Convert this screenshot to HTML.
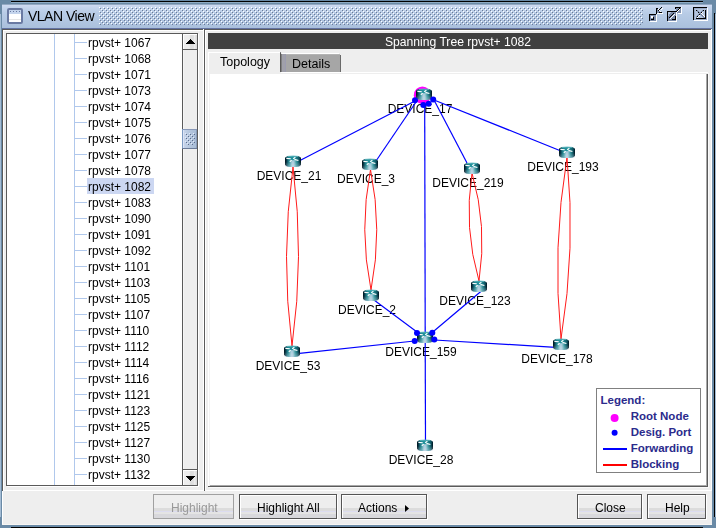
<!DOCTYPE html>
<html><head><meta charset="utf-8"><style>
html,body{margin:0;padding:0;width:716px;height:528px;overflow:hidden;font-family:"Liberation Sans", sans-serif;}
</style></head><body>
<div style="position:absolute;left:0px;top:0px;width:716px;height:528px;background:#6a8aa6"></div>
<div style="position:absolute;left:11px;top:1px;width:692px;height:1px;background:#000"></div>
<div style="position:absolute;left:11px;top:2px;width:692px;height:1px;background:#90acc4"></div>
<div style="position:absolute;left:11px;top:527px;width:692px;height:1px;background:#000"></div>
<div style="position:absolute;left:714px;top:13px;width:1px;height:504px;background:#000"></div>
<div style="position:absolute;left:0px;top:14px;width:1px;height:503px;background:#a4bcd4"></div>
<div style="position:absolute;left:715px;top:14px;width:1px;height:503px;background:#a4bcd4"></div>
<div style="position:absolute;left:2px;top:4px;width:710px;height:521px;background:#eeeeee"></div>
<div style="position:absolute;left:2px;top:4px;width:710px;height:25px;background:linear-gradient(#93a9c2 0px,#93a9c2 1px,#d0daf2 1px,#c6d6ee 3px,#b8cce6 9px,#aac0dc 24px,#6474a2 24px,#6474a2 25px)"></div>
<svg style="position:absolute;left:99px;top:7px" width="544" height="18"><defs><pattern id="bp" width="4" height="4" patternUnits="userSpaceOnUse"><rect x="0" y="0" width="1" height="1" fill="#ffffff"/><rect x="2" y="2" width="1" height="1" fill="#ffffff"/><rect x="1" y="1" width="1" height="1" fill="#6a7a98"/><rect x="3" y="3" width="1" height="1" fill="#6a7a98"/></pattern></defs><rect width="544" height="18" fill="url(#bp)"/></svg>
<svg style="position:absolute;left:7px;top:8px" width="16" height="16">
<rect x="0" y="0" width="16" height="16" rx="2.2" fill="#6a7aa2"/>
<rect x="2" y="2" width="12" height="4" fill="#c4d4ec"/>
<rect x="3" y="3" width="1" height="1" fill="#6a7aa2"/><rect x="6" y="3" width="1" height="1" fill="#6a7aa2"/><rect x="9" y="3" width="1" height="1" fill="#6a7aa2"/><rect x="12" y="3" width="1" height="1" fill="#6a7aa2"/>
<rect x="2" y="6" width="12" height="8" fill="#ffffff"/>
<rect x="2" y="11" width="12" height="1" fill="#e6e6e6"/>
</svg>
<div style="position:absolute;left:28px;top:9.15px;font-size:14px;line-height:14px;white-space:pre;will-change:transform;color:#000;letter-spacing:-0.5px">VLAN View</div>
<svg style="position:absolute;left:647px;top:7px" width="18" height="15" shape-rendering="crispEdges"><rect x="14" y="0" width="1" height="1" fill="#000000"/><rect x="9" y="1" width="2" height="1" fill="#000000"/><rect x="13" y="1" width="1" height="1" fill="#000000"/><rect x="15" y="1" width="1" height="1" fill="#ffffff"/><rect x="9" y="2" width="1" height="1" fill="#000000"/><rect x="10" y="2" width="1" height="1" fill="#7d8dab"/><rect x="11" y="2" width="1" height="1" fill="#ffffff"/><rect x="12" y="2" width="1" height="1" fill="#000000"/><rect x="14" y="2" width="1" height="1" fill="#ffffff"/><rect x="9" y="3" width="1" height="1" fill="#000000"/><rect x="10" y="3" width="1" height="1" fill="#7d8dab"/><rect x="11" y="3" width="1" height="1" fill="#000000"/><rect x="12" y="3" width="1" height="1" fill="#ffffff"/><rect x="9" y="4" width="1" height="1" fill="#000000"/><rect x="10" y="4" width="3" height="1" fill="#7d8dab"/><rect x="13" y="4" width="1" height="1" fill="#ffffff"/><rect x="9" y="5" width="1" height="1" fill="#000000"/><rect x="10" y="5" width="2" height="1" fill="#7d8dab"/><rect x="12" y="5" width="3" height="1" fill="#000000"/><rect x="9" y="6" width="1" height="1" fill="#000000"/><rect x="10" y="6" width="6" height="1" fill="#ffffff"/><rect x="2" y="7" width="7" height="1" fill="#000000"/><rect x="2" y="8" width="1" height="1" fill="#000000"/><rect x="3" y="8" width="6" height="1" fill="#7d8dab"/><rect x="9" y="8" width="1" height="1" fill="#ffffff"/><rect x="2" y="9" width="1" height="1" fill="#000000"/><rect x="3" y="9" width="1" height="1" fill="#7d8dab"/><rect x="4" y="9" width="2" height="1" fill="#ffffff"/><rect x="6" y="9" width="3" height="1" fill="#7d8dab"/><rect x="9" y="9" width="1" height="1" fill="#ffffff"/><rect x="2" y="10" width="1" height="1" fill="#000000"/><rect x="3" y="10" width="1" height="1" fill="#7d8dab"/><rect x="4" y="10" width="2" height="1" fill="#ffffff"/><rect x="6" y="10" width="1" height="1" fill="#000000"/><rect x="7" y="10" width="2" height="1" fill="#7d8dab"/><rect x="9" y="10" width="1" height="1" fill="#ffffff"/><rect x="2" y="11" width="1" height="1" fill="#000000"/><rect x="3" y="11" width="3" height="1" fill="#7d8dab"/><rect x="6" y="11" width="1" height="1" fill="#000000"/><rect x="7" y="11" width="2" height="1" fill="#7d8dab"/><rect x="9" y="11" width="1" height="1" fill="#ffffff"/><rect x="2" y="12" width="1" height="1" fill="#000000"/><rect x="3" y="12" width="1" height="1" fill="#7d8dab"/><rect x="4" y="12" width="3" height="1" fill="#000000"/><rect x="7" y="12" width="2" height="1" fill="#7d8dab"/><rect x="9" y="12" width="1" height="1" fill="#ffffff"/><rect x="2" y="13" width="1" height="1" fill="#000000"/><rect x="3" y="13" width="6" height="1" fill="#7d8dab"/><rect x="9" y="13" width="1" height="1" fill="#ffffff"/><rect x="3" y="14" width="7" height="1" fill="#ffffff"/></svg>
<svg style="position:absolute;left:665px;top:7px" width="18" height="15" shape-rendering="crispEdges"><rect x="10" y="0" width="6" height="1" fill="#000000"/><rect x="16" y="0" width="1" height="1" fill="#ffffff"/><rect x="10" y="1" width="1" height="1" fill="#000000"/><rect x="11" y="1" width="3" height="1" fill="#7d8dab"/><rect x="14" y="1" width="1" height="1" fill="#000000"/><rect x="15" y="1" width="1" height="1" fill="#7d8dab"/><rect x="16" y="1" width="1" height="1" fill="#ffffff"/><rect x="11" y="2" width="2" height="1" fill="#7d8dab"/><rect x="13" y="2" width="1" height="1" fill="#000000"/><rect x="14" y="2" width="1" height="1" fill="#ffffff"/><rect x="15" y="2" width="1" height="1" fill="#7d8dab"/><rect x="16" y="2" width="1" height="1" fill="#ffffff"/><rect x="11" y="3" width="1" height="1" fill="#7d8dab"/><rect x="12" y="3" width="1" height="1" fill="#000000"/><rect x="13" y="3" width="1" height="1" fill="#ffffff"/><rect x="14" y="3" width="2" height="1" fill="#7d8dab"/><rect x="16" y="3" width="1" height="1" fill="#ffffff"/><rect x="2" y="4" width="10" height="1" fill="#000000"/><rect x="12" y="4" width="1" height="1" fill="#ffffff"/><rect x="13" y="4" width="3" height="1" fill="#7d8dab"/><rect x="16" y="4" width="1" height="1" fill="#ffffff"/><rect x="2" y="5" width="1" height="1" fill="#000000"/><rect x="3" y="5" width="3" height="1" fill="#b4c4dc"/><rect x="6" y="5" width="5" height="1" fill="#7d8dab"/><rect x="11" y="5" width="1" height="1" fill="#ffffff"/><rect x="12" y="5" width="4" height="1" fill="#7d8dab"/><rect x="16" y="5" width="1" height="1" fill="#ffffff"/><rect x="2" y="6" width="1" height="1" fill="#000000"/><rect x="3" y="6" width="2" height="1" fill="#b4c4dc"/><rect x="5" y="6" width="3" height="1" fill="#7d8dab"/><rect x="8" y="6" width="1" height="1" fill="#000000"/><rect x="9" y="6" width="2" height="1" fill="#7d8dab"/><rect x="11" y="6" width="1" height="1" fill="#ffffff"/><rect x="13" y="6" width="4" height="1" fill="#ffffff"/><rect x="2" y="7" width="1" height="1" fill="#000000"/><rect x="3" y="7" width="1" height="1" fill="#b4c4dc"/><rect x="4" y="7" width="3" height="1" fill="#7d8dab"/><rect x="7" y="7" width="1" height="1" fill="#000000"/><rect x="8" y="7" width="1" height="1" fill="#7d8dab"/><rect x="9" y="7" width="1" height="1" fill="#ffffff"/><rect x="10" y="7" width="1" height="1" fill="#7d8dab"/><rect x="11" y="7" width="1" height="1" fill="#ffffff"/><rect x="2" y="8" width="1" height="1" fill="#000000"/><rect x="3" y="8" width="1" height="1" fill="#b4c4dc"/><rect x="4" y="8" width="2" height="1" fill="#7d8dab"/><rect x="6" y="8" width="1" height="1" fill="#000000"/><rect x="7" y="8" width="1" height="1" fill="#7d8dab"/><rect x="8" y="8" width="1" height="1" fill="#ffffff"/><rect x="9" y="8" width="2" height="1" fill="#7d8dab"/><rect x="11" y="8" width="1" height="1" fill="#ffffff"/><rect x="2" y="9" width="1" height="1" fill="#000000"/><rect x="3" y="9" width="2" height="1" fill="#7d8dab"/><rect x="5" y="9" width="1" height="1" fill="#000000"/><rect x="6" y="9" width="1" height="1" fill="#7d8dab"/><rect x="7" y="9" width="1" height="1" fill="#ffffff"/><rect x="8" y="9" width="2" height="1" fill="#7d8dab"/><rect x="10" y="9" width="1" height="1" fill="#000000"/><rect x="11" y="9" width="1" height="1" fill="#ffffff"/><rect x="2" y="10" width="1" height="1" fill="#000000"/><rect x="3" y="10" width="1" height="1" fill="#7d8dab"/><rect x="4" y="10" width="1" height="1" fill="#000000"/><rect x="5" y="10" width="1" height="1" fill="#7d8dab"/><rect x="6" y="10" width="1" height="1" fill="#ffffff"/><rect x="7" y="10" width="3" height="1" fill="#7d8dab"/><rect x="10" y="10" width="1" height="1" fill="#000000"/><rect x="11" y="10" width="1" height="1" fill="#ffffff"/><rect x="2" y="11" width="1" height="1" fill="#000000"/><rect x="3" y="11" width="2" height="1" fill="#7d8dab"/><rect x="5" y="11" width="1" height="1" fill="#ffffff"/><rect x="6" y="11" width="4" height="1" fill="#7d8dab"/><rect x="10" y="11" width="1" height="1" fill="#000000"/><rect x="11" y="11" width="1" height="1" fill="#ffffff"/><rect x="2" y="12" width="1" height="1" fill="#000000"/><rect x="3" y="12" width="4" height="1" fill="#7d8dab"/><rect x="7" y="12" width="4" height="1" fill="#000000"/><rect x="11" y="12" width="1" height="1" fill="#ffffff"/><rect x="2" y="13" width="1" height="1" fill="#000000"/><rect x="3" y="13" width="8" height="1" fill="#7d8dab"/><rect x="11" y="13" width="1" height="1" fill="#ffffff"/><rect x="3" y="14" width="9" height="1" fill="#ffffff"/></svg>
<svg style="position:absolute;left:691px;top:7px" width="18" height="14" shape-rendering="crispEdges"><rect x="2" y="0" width="14" height="1" fill="#000000"/><rect x="2" y="1" width="1" height="1" fill="#000000"/><rect x="3" y="1" width="13" height="1" fill="#98a8c4"/><rect x="16" y="1" width="1" height="1" fill="#ffffff"/><rect x="2" y="2" width="1" height="1" fill="#000000"/><rect x="3" y="2" width="1" height="1" fill="#98a8c4"/><rect x="4" y="2" width="11" height="1" fill="#b4c4dc"/><rect x="15" y="2" width="1" height="1" fill="#98a8c4"/><rect x="16" y="2" width="1" height="1" fill="#ffffff"/><rect x="2" y="3" width="1" height="1" fill="#000000"/><rect x="3" y="3" width="1" height="1" fill="#98a8c4"/><rect x="4" y="3" width="1" height="1" fill="#b4c4dc"/><rect x="5" y="3" width="1" height="1" fill="#000000"/><rect x="6" y="3" width="1" height="1" fill="#7d8dab"/><rect x="7" y="3" width="4" height="1" fill="#b4c4dc"/><rect x="11" y="3" width="1" height="1" fill="#7d8dab"/><rect x="12" y="3" width="1" height="1" fill="#000000"/><rect x="13" y="3" width="1" height="1" fill="#b4c4dc"/><rect x="14" y="3" width="1" height="1" fill="#000000"/><rect x="15" y="3" width="1" height="1" fill="#98a8c4"/><rect x="16" y="3" width="1" height="1" fill="#ffffff"/><rect x="2" y="4" width="1" height="1" fill="#000000"/><rect x="3" y="4" width="1" height="1" fill="#98a8c4"/><rect x="4" y="4" width="2" height="1" fill="#b4c4dc"/><rect x="6" y="4" width="2" height="1" fill="#7d8dab"/><rect x="8" y="4" width="2" height="1" fill="#b4c4dc"/><rect x="10" y="4" width="2" height="1" fill="#7d8dab"/><rect x="12" y="4" width="2" height="1" fill="#b4c4dc"/><rect x="14" y="4" width="1" height="1" fill="#000000"/><rect x="15" y="4" width="1" height="1" fill="#98a8c4"/><rect x="16" y="4" width="1" height="1" fill="#ffffff"/><rect x="2" y="5" width="1" height="1" fill="#000000"/><rect x="3" y="5" width="1" height="1" fill="#98a8c4"/><rect x="4" y="5" width="3" height="1" fill="#b4c4dc"/><rect x="7" y="5" width="1" height="1" fill="#000000"/><rect x="8" y="5" width="2" height="1" fill="#7d8dab"/><rect x="10" y="5" width="1" height="1" fill="#000000"/><rect x="11" y="5" width="1" height="1" fill="#ffffff"/><rect x="12" y="5" width="2" height="1" fill="#b4c4dc"/><rect x="14" y="5" width="1" height="1" fill="#000000"/><rect x="15" y="5" width="1" height="1" fill="#98a8c4"/><rect x="16" y="5" width="1" height="1" fill="#ffffff"/><rect x="2" y="6" width="1" height="1" fill="#000000"/><rect x="3" y="6" width="1" height="1" fill="#98a8c4"/><rect x="4" y="6" width="4" height="1" fill="#b4c4dc"/><rect x="8" y="6" width="2" height="1" fill="#7d8dab"/><rect x="10" y="6" width="1" height="1" fill="#ffffff"/><rect x="11" y="6" width="3" height="1" fill="#b4c4dc"/><rect x="14" y="6" width="1" height="1" fill="#000000"/><rect x="15" y="6" width="1" height="1" fill="#98a8c4"/><rect x="16" y="6" width="1" height="1" fill="#ffffff"/><rect x="2" y="7" width="1" height="1" fill="#000000"/><rect x="3" y="7" width="1" height="1" fill="#98a8c4"/><rect x="4" y="7" width="3" height="1" fill="#b4c4dc"/><rect x="7" y="7" width="1" height="1" fill="#7d8dab"/><rect x="8" y="7" width="1" height="1" fill="#000000"/><rect x="9" y="7" width="2" height="1" fill="#7d8dab"/><rect x="11" y="7" width="1" height="1" fill="#ffffff"/><rect x="12" y="7" width="2" height="1" fill="#b4c4dc"/><rect x="14" y="7" width="1" height="1" fill="#000000"/><rect x="15" y="7" width="1" height="1" fill="#98a8c4"/><rect x="16" y="7" width="1" height="1" fill="#ffffff"/><rect x="2" y="8" width="1" height="1" fill="#000000"/><rect x="3" y="8" width="1" height="1" fill="#98a8c4"/><rect x="4" y="8" width="2" height="1" fill="#b4c4dc"/><rect x="6" y="8" width="2" height="1" fill="#7d8dab"/><rect x="8" y="8" width="1" height="1" fill="#ffffff"/><rect x="9" y="8" width="1" height="1" fill="#b4c4dc"/><rect x="10" y="8" width="2" height="1" fill="#7d8dab"/><rect x="12" y="8" width="1" height="1" fill="#ffffff"/><rect x="13" y="8" width="1" height="1" fill="#b4c4dc"/><rect x="14" y="8" width="1" height="1" fill="#000000"/><rect x="15" y="8" width="1" height="1" fill="#98a8c4"/><rect x="16" y="8" width="1" height="1" fill="#ffffff"/><rect x="2" y="9" width="1" height="1" fill="#000000"/><rect x="3" y="9" width="1" height="1" fill="#98a8c4"/><rect x="4" y="9" width="1" height="1" fill="#b4c4dc"/><rect x="5" y="9" width="1" height="1" fill="#7d8dab"/><rect x="6" y="9" width="1" height="1" fill="#000000"/><rect x="7" y="9" width="1" height="1" fill="#ffffff"/><rect x="8" y="9" width="3" height="1" fill="#b4c4dc"/><rect x="11" y="9" width="2" height="1" fill="#7d8dab"/><rect x="13" y="9" width="1" height="1" fill="#ffffff"/><rect x="14" y="9" width="1" height="1" fill="#000000"/><rect x="15" y="9" width="1" height="1" fill="#98a8c4"/><rect x="16" y="9" width="1" height="1" fill="#ffffff"/><rect x="2" y="10" width="1" height="1" fill="#000000"/><rect x="3" y="10" width="1" height="1" fill="#98a8c4"/><rect x="4" y="10" width="1" height="1" fill="#b4c4dc"/><rect x="5" y="10" width="1" height="1" fill="#7d8dab"/><rect x="6" y="10" width="1" height="1" fill="#ffffff"/><rect x="7" y="10" width="5" height="1" fill="#b4c4dc"/><rect x="12" y="10" width="2" height="1" fill="#7d8dab"/><rect x="14" y="10" width="1" height="1" fill="#000000"/><rect x="15" y="10" width="1" height="1" fill="#98a8c4"/><rect x="16" y="10" width="1" height="1" fill="#ffffff"/><rect x="2" y="11" width="1" height="1" fill="#000000"/><rect x="3" y="11" width="1" height="1" fill="#98a8c4"/><rect x="4" y="11" width="1" height="1" fill="#b4c4dc"/><rect x="5" y="11" width="10" height="1" fill="#000000"/><rect x="15" y="11" width="1" height="1" fill="#98a8c4"/><rect x="16" y="11" width="1" height="1" fill="#ffffff"/><rect x="2" y="12" width="1" height="1" fill="#000000"/><rect x="3" y="12" width="13" height="1" fill="#98a8c4"/><rect x="16" y="12" width="1" height="1" fill="#ffffff"/><rect x="3" y="13" width="14" height="1" fill="#ffffff"/></svg>
<div style="position:absolute;left:2px;top:29px;width:709px;height:1px;background:#5a5a5a"></div>
<div style="position:absolute;left:2px;top:29px;width:1px;height:462px;background:#5a5a5a"></div>
<div style="position:absolute;left:3px;top:30px;width:708px;height:1px;background:#ffffff"></div>
<div style="position:absolute;left:3px;top:30px;width:1px;height:460px;background:#ffffff"></div>
<div style="position:absolute;left:3px;top:490px;width:709px;height:1px;background:#ffffff"></div>
<div style="position:absolute;left:711px;top:29px;width:1px;height:462px;background:#ffffff"></div>
<div style="position:absolute;left:2px;top:491px;width:1px;height:34px;background:#ffffff"></div>
<div style="position:absolute;left:2px;top:524px;width:710px;height:1px;background:#f8f6f4"></div>
<div style="position:absolute;left:6px;top:33px;width:192px;height:453px;background:#ffffff"></div>
<div style="position:absolute;left:6px;top:33px;width:192px;height:1px;background:#5a5a5a"></div>
<div style="position:absolute;left:6px;top:33px;width:1px;height:453px;background:#5a5a5a"></div>
<div style="position:absolute;left:6px;top:485px;width:192px;height:1px;background:#5a5a5a"></div>
<div style="position:absolute;left:197px;top:33px;width:1px;height:453px;background:#5a5a5a"></div>
<div style="position:absolute;left:198px;top:34px;width:1px;height:453px;background:#ffffff"></div>
<div style="position:absolute;left:7px;top:486px;width:192px;height:1px;background:#ffffff"></div>
<div style="position:absolute;left:54px;top:34px;width:1px;height:451px;background:#b0c8ec"></div>
<div style="position:absolute;left:74px;top:34px;width:1px;height:451px;background:#b0c8ec"></div>
<div style="position:absolute;left:75px;top:42px;width:12px;height:1px;background:#b0c8ec"></div>
<div style="position:absolute;left:87.5px;top:36.64px;font-size:12px;line-height:12px;white-space:pre;will-change:transform;color:#000">rpvst+ 1067</div>
<div style="position:absolute;left:75px;top:58px;width:12px;height:1px;background:#b0c8ec"></div>
<div style="position:absolute;left:87.5px;top:52.64px;font-size:12px;line-height:12px;white-space:pre;will-change:transform;color:#000">rpvst+ 1068</div>
<div style="position:absolute;left:75px;top:74px;width:12px;height:1px;background:#b0c8ec"></div>
<div style="position:absolute;left:87.5px;top:68.64px;font-size:12px;line-height:12px;white-space:pre;will-change:transform;color:#000">rpvst+ 1071</div>
<div style="position:absolute;left:75px;top:90px;width:12px;height:1px;background:#b0c8ec"></div>
<div style="position:absolute;left:87.5px;top:84.64px;font-size:12px;line-height:12px;white-space:pre;will-change:transform;color:#000">rpvst+ 1073</div>
<div style="position:absolute;left:75px;top:106px;width:12px;height:1px;background:#b0c8ec"></div>
<div style="position:absolute;left:87.5px;top:100.64px;font-size:12px;line-height:12px;white-space:pre;will-change:transform;color:#000">rpvst+ 1074</div>
<div style="position:absolute;left:75px;top:122px;width:12px;height:1px;background:#b0c8ec"></div>
<div style="position:absolute;left:87.5px;top:116.64px;font-size:12px;line-height:12px;white-space:pre;will-change:transform;color:#000">rpvst+ 1075</div>
<div style="position:absolute;left:75px;top:138px;width:12px;height:1px;background:#b0c8ec"></div>
<div style="position:absolute;left:87.5px;top:132.64px;font-size:12px;line-height:12px;white-space:pre;will-change:transform;color:#000">rpvst+ 1076</div>
<div style="position:absolute;left:75px;top:154px;width:12px;height:1px;background:#b0c8ec"></div>
<div style="position:absolute;left:87.5px;top:148.64px;font-size:12px;line-height:12px;white-space:pre;will-change:transform;color:#000">rpvst+ 1077</div>
<div style="position:absolute;left:75px;top:170px;width:12px;height:1px;background:#b0c8ec"></div>
<div style="position:absolute;left:87.5px;top:164.64px;font-size:12px;line-height:12px;white-space:pre;will-change:transform;color:#000">rpvst+ 1078</div>
<div style="position:absolute;left:75px;top:186px;width:12px;height:1px;background:#b0c8ec"></div>
<div style="position:absolute;left:87px;top:178px;width:67px;height:16px;background:#ccd7f2"></div>
<div style="position:absolute;left:87.5px;top:180.64px;font-size:12px;line-height:12px;white-space:pre;will-change:transform;color:#000">rpvst+ 1082</div>
<div style="position:absolute;left:75px;top:202px;width:12px;height:1px;background:#b0c8ec"></div>
<div style="position:absolute;left:87.5px;top:196.64px;font-size:12px;line-height:12px;white-space:pre;will-change:transform;color:#000">rpvst+ 1083</div>
<div style="position:absolute;left:75px;top:218px;width:12px;height:1px;background:#b0c8ec"></div>
<div style="position:absolute;left:87.5px;top:212.64px;font-size:12px;line-height:12px;white-space:pre;will-change:transform;color:#000">rpvst+ 1090</div>
<div style="position:absolute;left:75px;top:234px;width:12px;height:1px;background:#b0c8ec"></div>
<div style="position:absolute;left:87.5px;top:228.64px;font-size:12px;line-height:12px;white-space:pre;will-change:transform;color:#000">rpvst+ 1091</div>
<div style="position:absolute;left:75px;top:250px;width:12px;height:1px;background:#b0c8ec"></div>
<div style="position:absolute;left:87.5px;top:244.64px;font-size:12px;line-height:12px;white-space:pre;will-change:transform;color:#000">rpvst+ 1092</div>
<div style="position:absolute;left:75px;top:266px;width:12px;height:1px;background:#b0c8ec"></div>
<div style="position:absolute;left:87.5px;top:260.64px;font-size:12px;line-height:12px;white-space:pre;will-change:transform;color:#000">rpvst+ 1101</div>
<div style="position:absolute;left:75px;top:282px;width:12px;height:1px;background:#b0c8ec"></div>
<div style="position:absolute;left:87.5px;top:276.64px;font-size:12px;line-height:12px;white-space:pre;will-change:transform;color:#000">rpvst+ 1103</div>
<div style="position:absolute;left:75px;top:298px;width:12px;height:1px;background:#b0c8ec"></div>
<div style="position:absolute;left:87.5px;top:292.64px;font-size:12px;line-height:12px;white-space:pre;will-change:transform;color:#000">rpvst+ 1105</div>
<div style="position:absolute;left:75px;top:314px;width:12px;height:1px;background:#b0c8ec"></div>
<div style="position:absolute;left:87.5px;top:308.64px;font-size:12px;line-height:12px;white-space:pre;will-change:transform;color:#000">rpvst+ 1107</div>
<div style="position:absolute;left:75px;top:330px;width:12px;height:1px;background:#b0c8ec"></div>
<div style="position:absolute;left:87.5px;top:324.64px;font-size:12px;line-height:12px;white-space:pre;will-change:transform;color:#000">rpvst+ 1110</div>
<div style="position:absolute;left:75px;top:346px;width:12px;height:1px;background:#b0c8ec"></div>
<div style="position:absolute;left:87.5px;top:340.64px;font-size:12px;line-height:12px;white-space:pre;will-change:transform;color:#000">rpvst+ 1112</div>
<div style="position:absolute;left:75px;top:362px;width:12px;height:1px;background:#b0c8ec"></div>
<div style="position:absolute;left:87.5px;top:356.64px;font-size:12px;line-height:12px;white-space:pre;will-change:transform;color:#000">rpvst+ 1114</div>
<div style="position:absolute;left:75px;top:378px;width:12px;height:1px;background:#b0c8ec"></div>
<div style="position:absolute;left:87.5px;top:372.64px;font-size:12px;line-height:12px;white-space:pre;will-change:transform;color:#000">rpvst+ 1116</div>
<div style="position:absolute;left:75px;top:394px;width:12px;height:1px;background:#b0c8ec"></div>
<div style="position:absolute;left:87.5px;top:388.64px;font-size:12px;line-height:12px;white-space:pre;will-change:transform;color:#000">rpvst+ 1121</div>
<div style="position:absolute;left:75px;top:410px;width:12px;height:1px;background:#b0c8ec"></div>
<div style="position:absolute;left:87.5px;top:404.64px;font-size:12px;line-height:12px;white-space:pre;will-change:transform;color:#000">rpvst+ 1123</div>
<div style="position:absolute;left:75px;top:426px;width:12px;height:1px;background:#b0c8ec"></div>
<div style="position:absolute;left:87.5px;top:420.64px;font-size:12px;line-height:12px;white-space:pre;will-change:transform;color:#000">rpvst+ 1125</div>
<div style="position:absolute;left:75px;top:442px;width:12px;height:1px;background:#b0c8ec"></div>
<div style="position:absolute;left:87.5px;top:436.64px;font-size:12px;line-height:12px;white-space:pre;will-change:transform;color:#000">rpvst+ 1127</div>
<div style="position:absolute;left:75px;top:458px;width:12px;height:1px;background:#b0c8ec"></div>
<div style="position:absolute;left:87.5px;top:452.64px;font-size:12px;line-height:12px;white-space:pre;will-change:transform;color:#000">rpvst+ 1130</div>
<div style="position:absolute;left:75px;top:474px;width:12px;height:1px;background:#b0c8ec"></div>
<div style="position:absolute;left:87.5px;top:468.64px;font-size:12px;line-height:12px;white-space:pre;will-change:transform;color:#000">rpvst+ 1132</div>
<div style="position:absolute;left:182px;top:34px;width:15px;height:451px;background:#eeeeee"></div>
<div style="position:absolute;left:182px;top:34px;width:1px;height:451px;background:#5a5a5a"></div>
<div style="position:absolute;left:183px;top:50px;width:1px;height:419px;background:#f6f6f6"></div>
<div style="position:absolute;left:183px;top:34px;width:14px;height:15px;background:linear-gradient(90deg,#eeeeee 0,#eeeeee 45%,#dcdcdc 55%,#e0e0e0 75%,#eeeeee 80%,#d8d8d8 100%)"></div>
<div style="position:absolute;left:183px;top:34px;width:14px;height:1px;background:#fff"></div>
<div style="position:absolute;left:183px;top:34px;width:1px;height:15px;background:#fff"></div>
<div style="position:absolute;left:183px;top:49px;width:14px;height:1px;background:#5a5a5a"></div>
<div style="position:absolute;left:190px;top:39px;width:1px;height:1px;background:#000"></div>
<div style="position:absolute;left:189px;top:40px;width:3px;height:1px;background:#000"></div>
<div style="position:absolute;left:188px;top:41px;width:5px;height:1px;background:#000"></div>
<div style="position:absolute;left:187px;top:42px;width:7px;height:1px;background:#000"></div>
<div style="position:absolute;left:186px;top:43px;width:9px;height:1px;background:#000"></div>
<div style="position:absolute;left:183px;top:470px;width:14px;height:15px;background:linear-gradient(90deg,#eeeeee 0,#eeeeee 45%,#dcdcdc 55%,#e0e0e0 75%,#eeeeee 80%,#d8d8d8 100%)"></div>
<div style="position:absolute;left:183px;top:469px;width:14px;height:1px;background:#5a5a5a"></div>
<div style="position:absolute;left:183px;top:470px;width:14px;height:1px;background:#fff"></div>
<div style="position:absolute;left:183px;top:470px;width:1px;height:15px;background:#fff"></div>
<div style="position:absolute;left:186px;top:476px;width:9px;height:1px;background:#000"></div>
<div style="position:absolute;left:187px;top:477px;width:7px;height:1px;background:#000"></div>
<div style="position:absolute;left:188px;top:478px;width:5px;height:1px;background:#000"></div>
<div style="position:absolute;left:189px;top:479px;width:3px;height:1px;background:#000"></div>
<div style="position:absolute;left:190px;top:480px;width:1px;height:1px;background:#000"></div>
<div style="position:absolute;left:182px;top:129px;width:1px;height:20px;background:#7d9bc2"></div>
<div style="position:absolute;left:183px;top:129px;width:14px;height:1px;background:#8898b8"></div>
<div style="position:absolute;left:183px;top:130px;width:1px;height:18px;background:#dde4f6"></div>
<div style="position:absolute;left:184px;top:130px;width:12px;height:18px;background:linear-gradient(90deg,#c6d4ea,#b4c6de 50%,#a8bcd6)"></div>
<div style="position:absolute;left:196px;top:129px;width:1px;height:20px;background:#8a9cba"></div>
<div style="position:absolute;left:182px;top:148px;width:15px;height:1px;background:#6a7a98"></div>
<div style="position:absolute;left:185px;top:133px;width:1px;height:1px;background:#e4eaf8"></div>
<div style="position:absolute;left:186px;top:134px;width:1px;height:1px;background:#5c6c8c"></div>
<div style="position:absolute;left:189px;top:133px;width:1px;height:1px;background:#e4eaf8"></div>
<div style="position:absolute;left:190px;top:134px;width:1px;height:1px;background:#5c6c8c"></div>
<div style="position:absolute;left:193px;top:133px;width:1px;height:1px;background:#e4eaf8"></div>
<div style="position:absolute;left:194px;top:134px;width:1px;height:1px;background:#5c6c8c"></div>
<div style="position:absolute;left:187px;top:135px;width:1px;height:1px;background:#e4eaf8"></div>
<div style="position:absolute;left:188px;top:136px;width:1px;height:1px;background:#5c6c8c"></div>
<div style="position:absolute;left:191px;top:135px;width:1px;height:1px;background:#e4eaf8"></div>
<div style="position:absolute;left:192px;top:136px;width:1px;height:1px;background:#5c6c8c"></div>
<div style="position:absolute;left:185px;top:137px;width:1px;height:1px;background:#e4eaf8"></div>
<div style="position:absolute;left:186px;top:138px;width:1px;height:1px;background:#5c6c8c"></div>
<div style="position:absolute;left:189px;top:137px;width:1px;height:1px;background:#e4eaf8"></div>
<div style="position:absolute;left:190px;top:138px;width:1px;height:1px;background:#5c6c8c"></div>
<div style="position:absolute;left:193px;top:137px;width:1px;height:1px;background:#e4eaf8"></div>
<div style="position:absolute;left:194px;top:138px;width:1px;height:1px;background:#5c6c8c"></div>
<div style="position:absolute;left:187px;top:139px;width:1px;height:1px;background:#e4eaf8"></div>
<div style="position:absolute;left:188px;top:140px;width:1px;height:1px;background:#5c6c8c"></div>
<div style="position:absolute;left:191px;top:139px;width:1px;height:1px;background:#e4eaf8"></div>
<div style="position:absolute;left:192px;top:140px;width:1px;height:1px;background:#5c6c8c"></div>
<div style="position:absolute;left:185px;top:141px;width:1px;height:1px;background:#e4eaf8"></div>
<div style="position:absolute;left:186px;top:142px;width:1px;height:1px;background:#5c6c8c"></div>
<div style="position:absolute;left:189px;top:141px;width:1px;height:1px;background:#e4eaf8"></div>
<div style="position:absolute;left:190px;top:142px;width:1px;height:1px;background:#5c6c8c"></div>
<div style="position:absolute;left:193px;top:141px;width:1px;height:1px;background:#e4eaf8"></div>
<div style="position:absolute;left:194px;top:142px;width:1px;height:1px;background:#5c6c8c"></div>
<div style="position:absolute;left:187px;top:143px;width:1px;height:1px;background:#e4eaf8"></div>
<div style="position:absolute;left:188px;top:144px;width:1px;height:1px;background:#5c6c8c"></div>
<div style="position:absolute;left:191px;top:143px;width:1px;height:1px;background:#e4eaf8"></div>
<div style="position:absolute;left:192px;top:144px;width:1px;height:1px;background:#5c6c8c"></div>
<div style="position:absolute;left:203px;top:29px;width:1px;height:462px;background:#ffffff"></div>
<div style="position:absolute;left:204px;top:29px;width:1px;height:462px;background:#5a5a5a"></div>
<div style="position:absolute;left:205px;top:30px;width:1px;height:460px;background:#ffffff"></div>
<div style="position:absolute;left:205px;top:30px;width:506px;height:1px;background:#ffffff"></div>
<div style="position:absolute;left:208px;top:33px;width:500px;height:16px;background:#404040"></div>
<div style="position:absolute;left:257.5px;width:400px;text-align:center;top:35.72px;font-size:12.15px;line-height:12.15px;white-space:pre;will-change:transform;color:#ffffff">Spanning Tree rpvst+ 1082</div>
<div style="position:absolute;left:208px;top:74px;width:500px;height:413px;background:#ffffff"></div>
<div style="position:absolute;left:208px;top:52px;width:1px;height:435px;background:#ffffff"></div>
<div style="position:absolute;left:209px;top:74px;width:1px;height:412px;background:#f2f2f2"></div>
<div style="position:absolute;left:707px;top:74px;width:1px;height:413px;background:#5a5a5a"></div>
<div style="position:absolute;left:706px;top:74px;width:1px;height:412px;background:#a8a8a8"></div>
<div style="position:absolute;left:210px;top:485px;width:497px;height:1px;background:#a8a8a8"></div>
<div style="position:absolute;left:708px;top:73px;width:1px;height:414px;background:#fafafa"></div>
<div style="position:absolute;left:208px;top:486px;width:500px;height:1px;background:#5a5a5a"></div>
<div style="position:absolute;left:209px;top:487px;width:500px;height:1px;background:#fafafa"></div>
<div style="position:absolute;left:209px;top:52px;width:71px;height:22px;background:#eeeeee"></div>
<div style="position:absolute;left:209px;top:52px;width:71px;height:1px;background:#ffffff"></div>
<div style="position:absolute;left:280px;top:53px;width:1px;height:19px;background:#5a5a5a"></div>
<div style="position:absolute;left:280px;top:52px;width:1px;height:1px;background:#7a7a7a"></div>
<div style="position:absolute;left:220px;top:56.42px;font-size:12.5px;line-height:12.5px;white-space:pre;will-change:transform;color:#000">Topology</div>
<div style="position:absolute;left:281px;top:54px;width:59px;height:18px;background:#a6a6a6"></div>
<div style="position:absolute;left:281px;top:54px;width:59px;height:1px;background:#b4b4b4"></div>
<div style="position:absolute;left:281px;top:54px;width:1px;height:18px;background:#808080"></div>
<div style="position:absolute;left:282px;top:54px;width:3px;height:18px;background:#a0a0aa"></div>
<div style="position:absolute;left:285px;top:54px;width:1px;height:18px;background:#9c9cb0"></div>
<div style="position:absolute;left:340px;top:55px;width:1px;height:17px;background:#6a6a6a"></div>
<div style="position:absolute;left:282px;top:53px;width:57px;height:1px;background:#ffffff"></div>
<div style="position:absolute;left:281px;top:72px;width:427px;height:1px;background:#ffffff"></div>
<div style="position:absolute;left:281px;top:73px;width:427px;height:1px;background:#eeeeee"></div>
<div style="position:absolute;left:292px;top:58.42px;font-size:12.5px;line-height:12.5px;white-space:pre;will-change:transform;color:#000">Details</div>
<svg style="position:absolute;left:0;top:0" width="716" height="528" viewBox="0 0 716 528">
<defs>
<linearGradient id="rb" x1="0" x2="1" y1="0" y2="0">
<stop offset="0" stop-color="#000e16"/><stop offset="0.08" stop-color="#043040"/><stop offset="0.2" stop-color="#1a7480"/><stop offset="0.3" stop-color="#3c9aa2"/>
<stop offset="0.42" stop-color="#9cc8d4"/><stop offset="0.5" stop-color="#b8d0e4"/><stop offset="0.58" stop-color="#94c4d0"/><stop offset="0.7" stop-color="#3c9aa2"/><stop offset="0.85" stop-color="#125e6a"/><stop offset="0.94" stop-color="#043040"/><stop offset="1" stop-color="#000e16"/>
</linearGradient>
<linearGradient id="rt" x1="0" x2="1" y1="0" y2="0">
<stop offset="0" stop-color="#053c4a"/><stop offset="0.25" stop-color="#1e8a94"/><stop offset="0.6" stop-color="#2898a2"/><stop offset="1" stop-color="#053c4a"/>
</linearGradient>
<linearGradient id="rv" x1="0" x2="0" y1="0" y2="1">
<stop offset="0" stop-color="#ffffff" stop-opacity="0"/><stop offset="0.55" stop-color="#ffffff" stop-opacity="0"/><stop offset="1" stop-color="#d8e0f0" stop-opacity="0.35"/>
</linearGradient>
<g id="router">
<path d="M2,0.5 Q8,-0.6 14,0.5 L16,1.8 L16,9 L14,10.5 Q8,11.6 2,10.5 L0,9 L0,1.8 Z" fill="url(#rb)"/>
<path d="M2,0.5 Q8,-0.6 14,0.5 L15.6,2 Q8,6.6 0.4,2 Z" fill="url(#rt)"/>
<path d="M3,0.4 Q8,-0.3 13,0.4" stroke="#5ab4bc" stroke-width="0.9" fill="none"/>
<rect x="0" y="0" width="16" height="11" fill="url(#rv)"/>
<path d="M1.4,2.4 L5.8,2.7 M9.4,3.4 L13.4,4.5 M10.4,1.3 L8.2,2.8 M6.6,4.1 L4.8,5.9" stroke="#ffffff" stroke-width="1.1" fill="none"/>
</g>
</defs>
<text x="420" y="112.5" font-family="Liberation Sans" font-size="12" text-anchor="middle" fill="#000">DEVICE_17</text>
<text x="289" y="179.5" font-family="Liberation Sans" font-size="12" text-anchor="middle" fill="#000">DEVICE_21</text>
<text x="366" y="182.5" font-family="Liberation Sans" font-size="12" text-anchor="middle" fill="#000">DEVICE_3</text>
<text x="468" y="186.5" font-family="Liberation Sans" font-size="12" text-anchor="middle" fill="#000">DEVICE_219</text>
<text x="563" y="170.5" font-family="Liberation Sans" font-size="12" text-anchor="middle" fill="#000">DEVICE_193</text>
<text x="367" y="313.5" font-family="Liberation Sans" font-size="12" text-anchor="middle" fill="#000">DEVICE_2</text>
<text x="475" y="304.5" font-family="Liberation Sans" font-size="12" text-anchor="middle" fill="#000">DEVICE_123</text>
<text x="421" y="355.5" font-family="Liberation Sans" font-size="12" text-anchor="middle" fill="#000">DEVICE_159</text>
<text x="288" y="369.5" font-family="Liberation Sans" font-size="12" text-anchor="middle" fill="#000">DEVICE_53</text>
<text x="557" y="362.5" font-family="Liberation Sans" font-size="12" text-anchor="middle" fill="#000">DEVICE_178</text>
<text x="421" y="463.5" font-family="Liberation Sans" font-size="12" text-anchor="middle" fill="#000">DEVICE_28</text>
<path d="M293,167 Q280.50,256.43 292,346" stroke="#ff1a1a" stroke-width="1" fill="none"/>
<path d="M293,167 Q304.50,256.57 292,346" stroke="#ff1a1a" stroke-width="1" fill="none"/>
<path d="M370.5,169.5 Q358.75,229.80 371,290" stroke="#ff1a1a" stroke-width="1" fill="none"/>
<path d="M370.5,169.5 Q382.75,229.70 371,290" stroke="#ff1a1a" stroke-width="1" fill="none"/>
<path d="M472,173 Q463.53,227.78 479,281" stroke="#ff1a1a" stroke-width="1" fill="none"/>
<path d="M472,173 Q487.47,226.22 479,281" stroke="#ff1a1a" stroke-width="1" fill="none"/>
<path d="M567,157 Q552.01,247.60 561,339" stroke="#ff1a1a" stroke-width="1" fill="none"/>
<path d="M567,157 Q575.99,248.40 561,339" stroke="#ff1a1a" stroke-width="1" fill="none"/>
<line x1="299" y1="161" x2="415" y2="101" stroke="#0000ff" stroke-width="1.2"/>
<line x1="376" y1="161" x2="416" y2="102" stroke="#0000ff" stroke-width="1.2"/>
<line x1="424.7" y1="105" x2="425.2" y2="333" stroke="#0000ff" stroke-width="1.2"/>
<line x1="434" y1="100" x2="467" y2="163" stroke="#0000ff" stroke-width="1.2"/>
<line x1="434" y1="100" x2="561" y2="151" stroke="#0000ff" stroke-width="1.2"/>
<line x1="374" y1="300" x2="417" y2="332" stroke="#0000ff" stroke-width="1.2"/>
<line x1="481.4" y1="291" x2="432.8" y2="332" stroke="#0000ff" stroke-width="1.2"/>
<line x1="299.5" y1="353.3" x2="414.5" y2="341" stroke="#0000ff" stroke-width="1.2"/>
<line x1="434.5" y1="340" x2="555.5" y2="347.3" stroke="#0000ff" stroke-width="1.2"/>
<line x1="425.2" y1="343" x2="425.5" y2="441" stroke="#0000ff" stroke-width="1.2"/>
<circle cx="422.4" cy="95.2" r="8.6" fill="#ff00ff"/>
<use href="#router" x="416" y="89"/>
<use href="#router" x="285" y="156"/>
<use href="#router" x="362" y="159"/>
<use href="#router" x="464" y="163"/>
<use href="#router" x="559" y="147"/>
<use href="#router" x="363" y="290"/>
<use href="#router" x="471" y="281"/>
<use href="#router" x="417" y="332"/>
<use href="#router" x="284" y="346"/>
<use href="#router" x="553" y="339"/>
<use href="#router" x="417" y="440"/>
<circle cx="415" cy="100.3" r="3" fill="#0000ff"/>
<circle cx="433.2" cy="99.5" r="3" fill="#0000ff"/>
<circle cx="423.3" cy="105" r="3" fill="#0000ff"/>
<circle cx="428.7" cy="103.8" r="3" fill="#0000ff"/>
<circle cx="417" cy="333" r="3" fill="#0000ff"/>
<circle cx="432.3" cy="332.7" r="3" fill="#0000ff"/>
<circle cx="414.7" cy="340.9" r="3" fill="#0000ff"/>
<circle cx="434.3" cy="339.5" r="3" fill="#0000ff"/>
<rect x="596.5" y="388.5" width="104" height="84" fill="#ffffff" stroke="#808080" stroke-width="1"/>
<text x="600.5" y="404" font-family="Liberation Sans" font-size="11.5" font-weight="bold" fill="#2b2b8c">Legend:</text>
<text x="630.7" y="419.8" font-family="Liberation Sans" font-size="11.5" font-weight="bold" fill="#2b2b8c">Root Node</text>
<text x="630.7" y="435.9" font-family="Liberation Sans" font-size="11.5" font-weight="bold" fill="#2b2b8c">Desig. Port</text>
<text x="630.7" y="452" font-family="Liberation Sans" font-size="11.5" font-weight="bold" fill="#2b2b8c">Forwarding</text>
<text x="630.7" y="468" font-family="Liberation Sans" font-size="11.5" font-weight="bold" fill="#2b2b8c">Blocking</text>
<circle cx="614.6" cy="417.9" r="4" fill="#ff00ff"/>
<circle cx="614.6" cy="432.7" r="3" fill="#0000ff"/>
<rect x="603" y="448" width="24" height="2" fill="#0000ff"/>
<rect x="603" y="464" width="24" height="2" fill="#ff0000"/>
</svg>
<div style="position:absolute;left:154px;top:495px;width:80px;height:24px;background:linear-gradient(#eeeeee 0px,#eeeeee 13px,#dcdcdc 13px,#dcdcdc 16px,#dcdcf0 16px,#dcdcf0 17.5px,#e4e4e4 17.5px,#e4e4e4 19.5px,#d8d8dc 19.5px,#d8d8dc 24px)"></div>
<div style="position:absolute;left:153px;top:494px;width:81px;height:1px;background:#a0a0a0"></div>
<div style="position:absolute;left:153px;top:494px;width:1px;height:25px;background:#a0a0a0"></div>
<div style="position:absolute;left:153px;top:518px;width:81px;height:1px;background:#a0a0a0"></div>
<div style="position:absolute;left:233px;top:494px;width:1px;height:25px;background:#a0a0a0"></div>
<div style="position:absolute;left:170.5px;top:502.04px;font-size:12px;line-height:12px;white-space:pre;will-change:transform;color:#999999">Highlight</div>
<div style="position:absolute;left:240px;top:495px;width:97px;height:24px;background:linear-gradient(#eeeeee 0px,#eeeeee 13px,#dcdcdc 13px,#dcdcdc 16px,#dcdcf0 16px,#dcdcf0 17.5px,#e4e4e4 17.5px,#e4e4e4 19.5px,#d8d8dc 19.5px,#d8d8dc 24px)"></div>
<div style="position:absolute;left:239px;top:494px;width:98px;height:1px;background:#555"></div>
<div style="position:absolute;left:239px;top:494px;width:1px;height:25px;background:#555"></div>
<div style="position:absolute;left:239px;top:518px;width:98px;height:1px;background:#555"></div>
<div style="position:absolute;left:336px;top:494px;width:1px;height:25px;background:#555"></div>
<div style="position:absolute;left:240px;top:495px;width:96px;height:1px;background:#fff"></div>
<div style="position:absolute;left:240px;top:495px;width:1px;height:23px;background:#fff"></div>
<div style="position:absolute;left:240px;top:519px;width:98px;height:1px;background:#fff"></div>
<div style="position:absolute;left:337px;top:495px;width:1px;height:25px;background:#fff"></div>
<div style="position:absolute;left:256.5px;top:502.04px;font-size:12px;line-height:12px;white-space:pre;will-change:transform;color:#000">Highlight All</div>
<div style="position:absolute;left:342px;top:495px;width:85px;height:24px;background:linear-gradient(#eeeeee 0px,#eeeeee 13px,#dcdcdc 13px,#dcdcdc 16px,#dcdcf0 16px,#dcdcf0 17.5px,#e4e4e4 17.5px,#e4e4e4 19.5px,#d8d8dc 19.5px,#d8d8dc 24px)"></div>
<div style="position:absolute;left:341px;top:494px;width:86px;height:1px;background:#555"></div>
<div style="position:absolute;left:341px;top:494px;width:1px;height:25px;background:#555"></div>
<div style="position:absolute;left:341px;top:518px;width:86px;height:1px;background:#555"></div>
<div style="position:absolute;left:426px;top:494px;width:1px;height:25px;background:#555"></div>
<div style="position:absolute;left:342px;top:495px;width:84px;height:1px;background:#fff"></div>
<div style="position:absolute;left:342px;top:495px;width:1px;height:23px;background:#fff"></div>
<div style="position:absolute;left:342px;top:519px;width:86px;height:1px;background:#fff"></div>
<div style="position:absolute;left:427px;top:495px;width:1px;height:25px;background:#fff"></div>
<div style="position:absolute;left:358px;top:502.04px;font-size:12px;line-height:12px;white-space:pre;will-change:transform;color:#000">Actions</div>
<svg style="position:absolute;left:405px;top:505px" width="4" height="7"><polygon points="0,0 4,3.5 0,7" fill="#000"/></svg>
<div style="position:absolute;left:578px;top:495px;width:64px;height:24px;background:linear-gradient(#eeeeee 0px,#eeeeee 13px,#dcdcdc 13px,#dcdcdc 16px,#dcdcf0 16px,#dcdcf0 17.5px,#e4e4e4 17.5px,#e4e4e4 19.5px,#d8d8dc 19.5px,#d8d8dc 24px)"></div>
<div style="position:absolute;left:577px;top:494px;width:65px;height:1px;background:#555"></div>
<div style="position:absolute;left:577px;top:494px;width:1px;height:25px;background:#555"></div>
<div style="position:absolute;left:577px;top:518px;width:65px;height:1px;background:#555"></div>
<div style="position:absolute;left:641px;top:494px;width:1px;height:25px;background:#555"></div>
<div style="position:absolute;left:578px;top:495px;width:63px;height:1px;background:#fff"></div>
<div style="position:absolute;left:578px;top:495px;width:1px;height:23px;background:#fff"></div>
<div style="position:absolute;left:578px;top:519px;width:65px;height:1px;background:#fff"></div>
<div style="position:absolute;left:642px;top:495px;width:1px;height:25px;background:#fff"></div>
<div style="position:absolute;left:595px;top:502.04px;font-size:12px;line-height:12px;white-space:pre;will-change:transform;color:#000">Close</div>
<div style="position:absolute;left:648px;top:495px;width:58px;height:24px;background:linear-gradient(#eeeeee 0px,#eeeeee 13px,#dcdcdc 13px,#dcdcdc 16px,#dcdcf0 16px,#dcdcf0 17.5px,#e4e4e4 17.5px,#e4e4e4 19.5px,#d8d8dc 19.5px,#d8d8dc 24px)"></div>
<div style="position:absolute;left:647px;top:494px;width:59px;height:1px;background:#555"></div>
<div style="position:absolute;left:647px;top:494px;width:1px;height:25px;background:#555"></div>
<div style="position:absolute;left:647px;top:518px;width:59px;height:1px;background:#555"></div>
<div style="position:absolute;left:705px;top:494px;width:1px;height:25px;background:#555"></div>
<div style="position:absolute;left:648px;top:495px;width:57px;height:1px;background:#fff"></div>
<div style="position:absolute;left:648px;top:495px;width:1px;height:23px;background:#fff"></div>
<div style="position:absolute;left:648px;top:519px;width:59px;height:1px;background:#fff"></div>
<div style="position:absolute;left:706px;top:495px;width:1px;height:25px;background:#fff"></div>
<div style="position:absolute;left:664.5px;top:502.04px;font-size:12px;line-height:12px;white-space:pre;will-change:transform;color:#000">Help</div>
</body></html>
